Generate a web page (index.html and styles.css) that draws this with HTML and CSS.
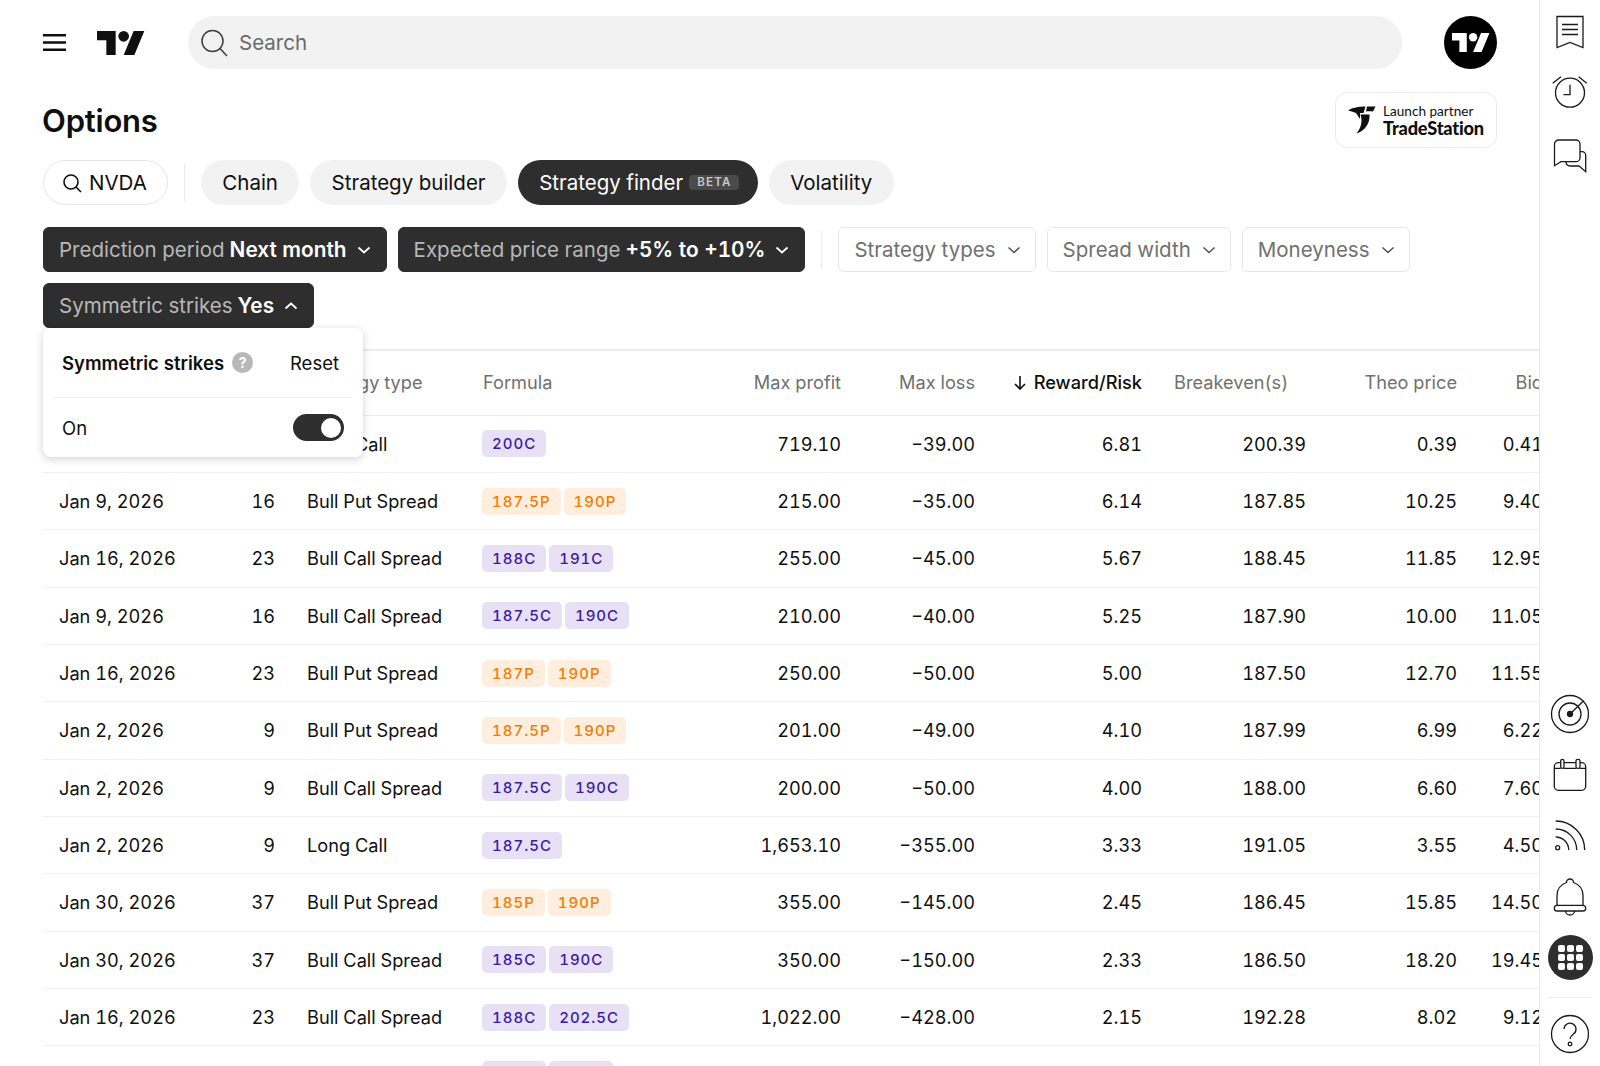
FILE: index.html
```html
<!DOCTYPE html>
<html lang="en">
<head>
<meta charset="utf-8">
<title>Options</title>
<link rel="stylesheet" href="styles.css">
</head>
<body>
<div class="app">
  <main class="main">
    <header class="topbar">
      <svg class="burger" viewBox="0 0 23 17" width="23" height="17"><path d="M0 1.200h23M0 8.500h23M0 15.800h23" stroke="#0f0f0f" stroke-width="2.400"/></svg>
      <svg class="logo" viewBox="0 0 36 18" width="48" height="24"><path d="M14 18H7V7H0V0h14zM28 18h-8L27.500 0h8z" fill="#0f0f0f"/><circle cx="20" cy="4" r="4" fill="#0f0f0f"/></svg>
      <div class="search">
        <svg viewBox="0 0 28 28" width="28" height="28"><circle cx="12.500" cy="12" r="10.500" fill="none" stroke="#3d3d3d" stroke-width="1.500"/><path d="M20 19.500l7 7.500" stroke="#3d3d3d" stroke-width="1.500"/></svg>
        <span>Search</span>
      </div>
      <div class="avatar">
        <svg viewBox="0 0 36 18" width="38" height="19"><path d="M14 18H7V7H0V0h14zM28 18h-8L27.500 0h8z" fill="#fff"/><circle cx="20" cy="4" r="4" fill="#fff"/></svg>
      </div>
    </header>

    <div class="titlerow">
      <h1>Options</h1>
      <div class="partner">
        <svg viewBox="0 0 28 28" width="28" height="28"><path d="M0 4.500C5 1.500 10 .5 17.500 .5L15.500 7H12V13L8 7C5 6 2.500 5 0 4.500z" fill="#0f0f0f"/><path d="M19 .5H27.500L25 5.500C22 5 20 5 18 5.500z" fill="#0f0f0f"/><path d="M12.500 8.500H21.500C22 17 17.500 24.500 8.500 27.500C12.500 22.500 15 16 12.500 8.500z" fill="#0f0f0f"/></svg>
        <div class="partner-text"><span class="lp">Launch partner</span><b>TradeStation</b></div>
      </div>
    </div>

    <nav class="tabs">
      <div class="tab tab-symbol">
        <svg viewBox="0 0 20 20" width="20" height="20"><circle cx="9" cy="9" r="7" fill="none" stroke="#0f0f0f" stroke-width="1.600"/><path d="M14 14l5 5" stroke="#0f0f0f" stroke-width="1.600"/></svg>
        NVDA
      </div>
      <div class="vsep"></div>
      <div class="tab">Chain</div>
      <div class="tab">Strategy builder</div>
      <div class="tab tab-active">Strategy finder <span class="beta">BETA</span></div>
      <div class="tab">Volatility</div>
    </nav>

    <div class="filters">
      <div class="filter filter-on">Prediction period <b>Next month</b><svg class="chev" viewBox="0 0 14 8" width="14" height="8"><path d="M1.500 1.500L7 6.500l5.500-5" fill="none" stroke="currentColor" stroke-width="1.800"/></svg></div>
      <div class="filter filter-on">Expected price range <b>+5% to +10%</b><svg class="chev" viewBox="0 0 14 8" width="14" height="8"><path d="M1.500 1.500L7 6.500l5.500-5" fill="none" stroke="currentColor" stroke-width="1.800"/></svg></div>
      <div class="vsep vsep-f"></div>
      <div class="filter">Strategy types<svg class="chev" viewBox="0 0 14 8" width="14" height="8"><path d="M1.500 1.500L7 6.500l5.500-5" fill="none" stroke="currentColor" stroke-width="1.600"/></svg></div>
      <div class="filter">Spread width<svg class="chev" viewBox="0 0 14 8" width="14" height="8"><path d="M1.500 1.500L7 6.500l5.500-5" fill="none" stroke="currentColor" stroke-width="1.600"/></svg></div>
      <div class="filter">Moneyness<svg class="chev" viewBox="0 0 14 8" width="14" height="8"><path d="M1.500 1.500L7 6.500l5.500-5" fill="none" stroke="currentColor" stroke-width="1.600"/></svg></div>
      <div class="filter-wrap">
        <div class="filter filter-on">Symmetric strikes <b>Yes</b><svg class="chev" viewBox="0 0 14 8" width="14" height="8"><path d="M1.500 6.500L7 1.500l5.500 5" fill="none" stroke="currentColor" stroke-width="1.800"/></svg></div>
        <div class="popover">
          <div class="pop-head">
            <span class="pop-title">Symmetric strikes</span>
            <span class="q">?</span>
            <span class="reset">Reset</span>
          </div>
          <div class="pop-row">
            <span>On</span>
            <span class="switch"><span class="knob"></span></span>
          </div>
        </div>
      </div>
    </div>

    <div class="tablewrap">
      <table>
        <colgroup>
          <col class="c1"><col class="c2"><col class="c3"><col class="c4"><col class="c5"><col class="c6"><col class="c7"><col class="c8"><col class="c9"><col class="c10">
        </colgroup>
        <thead>
          <tr>
            <th class="l">Expiration</th><th>DTE</th><th class="l">Strategy type</th><th class="l">Formula</th><th>Max profit</th><th>Max loss</th>
            <th class="sorted"><svg viewBox="0 0 12 14" width="12" height="14"><path d="M6 0v12.500M1 8l5 5 5-5" fill="none" stroke="#0f0f0f" stroke-width="1.600"/></svg> Reward/Risk</th>
            <th class="l">Breakeven(s)</th><th>Theo price</th><th>Bid</th>
          </tr>
        </thead>
        <tbody>
          <tr><td class="l">Jan 2, 2026</td><td>9</td><td class="l">Long Call</td><td class="l"><span class="tag c">200C</span></td><td>719.10</td><td>−39.00</td><td>6.81</td><td>200.39</td><td>0.39</td><td>0.41</td></tr>
          <tr><td class="l">Jan 9, 2026</td><td>16</td><td class="l">Bull Put Spread</td><td class="l"><span class="tag p">187.5P</span><span class="tag p">190P</span></td><td>215.00</td><td>−35.00</td><td>6.14</td><td>187.85</td><td>10.25</td><td>9.40</td></tr>
          <tr><td class="l">Jan 16, 2026</td><td>23</td><td class="l">Bull Call Spread</td><td class="l"><span class="tag c">188C</span><span class="tag c">191C</span></td><td>255.00</td><td>−45.00</td><td>5.67</td><td>188.45</td><td>11.85</td><td>12.95</td></tr>
          <tr><td class="l">Jan 9, 2026</td><td>16</td><td class="l">Bull Call Spread</td><td class="l"><span class="tag c">187.5C</span><span class="tag c">190C</span></td><td>210.00</td><td>−40.00</td><td>5.25</td><td>187.90</td><td>10.00</td><td>11.05</td></tr>
          <tr><td class="l">Jan 16, 2026</td><td>23</td><td class="l">Bull Put Spread</td><td class="l"><span class="tag p">187P</span><span class="tag p">190P</span></td><td>250.00</td><td>−50.00</td><td>5.00</td><td>187.50</td><td>12.70</td><td>11.55</td></tr>
          <tr><td class="l">Jan 2, 2026</td><td>9</td><td class="l">Bull Put Spread</td><td class="l"><span class="tag p">187.5P</span><span class="tag p">190P</span></td><td>201.00</td><td>−49.00</td><td>4.10</td><td>187.99</td><td>6.99</td><td>6.22</td></tr>
          <tr><td class="l">Jan 2, 2026</td><td>9</td><td class="l">Bull Call Spread</td><td class="l"><span class="tag c">187.5C</span><span class="tag c">190C</span></td><td>200.00</td><td>−50.00</td><td>4.00</td><td>188.00</td><td>6.60</td><td>7.60</td></tr>
          <tr><td class="l">Jan 2, 2026</td><td>9</td><td class="l">Long Call</td><td class="l"><span class="tag c">187.5C</span></td><td>1,653.10</td><td>−355.00</td><td>3.33</td><td>191.05</td><td>3.55</td><td>4.50</td></tr>
          <tr><td class="l">Jan 30, 2026</td><td>37</td><td class="l">Bull Put Spread</td><td class="l"><span class="tag p">185P</span><span class="tag p">190P</span></td><td>355.00</td><td>−145.00</td><td>2.45</td><td>186.45</td><td>15.85</td><td>14.50</td></tr>
          <tr><td class="l">Jan 30, 2026</td><td>37</td><td class="l">Bull Call Spread</td><td class="l"><span class="tag c">185C</span><span class="tag c">190C</span></td><td>350.00</td><td>−150.00</td><td>2.33</td><td>186.50</td><td>18.20</td><td>19.45</td></tr>
          <tr><td class="l">Jan 16, 2026</td><td>23</td><td class="l">Bull Call Spread</td><td class="l"><span class="tag c">188C</span><span class="tag c">202.5C</span></td><td>1,022.00</td><td>−428.00</td><td>2.15</td><td>192.28</td><td>8.02</td><td>9.12</td></tr>
          <tr><td class="l"></td><td></td><td class="l"></td><td class="l"><span class="tag c">188C</span><span class="tag c">190C</span></td><td></td><td></td><td></td><td></td><td></td><td></td></tr>
        </tbody>
      </table>
    </div>
  </main>

  <aside class="rail">
    <div class="rail-group">
      <div class="rail-item">
        <svg viewBox="0 0 40 40" width="40" height="40"><path d="M7 4.500h26v31l-13-5-13 5z"/><path d="M12 12.500h16M12 17.500h16M12 22.500h16"/></svg>
      </div>
      <div class="rail-item">
        <svg viewBox="0 0 40 40" width="40" height="40"><circle cx="20" cy="20.700" r="14.500"/><path d="M20 12.700v10h-6.500M2.700 11.300L11 4.700M28.700 4.700l8 6.600"/></svg>
      </div>
      <div class="rail-item rail-chat">
        <svg viewBox="0 0 40 40" width="40" height="40"><path d="M4.500 29.700V8a4 4 0 0 1 4-4H26a4 4 0 0 1 4 4v13.700a4 4 0 0 1-4 4H11z"/><path d="M30 15.700h2a3.700 3.700 0 0 1 3.700 3.700v16.300L29 30h-9a4 4 0 0 1-4-4.300"/></svg>
      </div>
    </div>
    <div class="rail-group">
      <div class="rail-item">
        <svg viewBox="0 0 40 40" width="40" height="40"><circle cx="20" cy="20" r="18.500"/><circle cx="20" cy="20" r="11"/><path d="M20 20L33.700 6.700"/><circle class="solid" cx="20" cy="20" r="2.500"/></svg>
      </div>
      <div class="rail-item">
        <svg viewBox="0 0 40 40" width="40" height="40"><path d="M10.700 7.700H8.300a4 4 0 0 0-4 4v19.600a4 4 0 0 0 4 4h23.400a4 4 0 0 0 4-4V11.700a4 4 0 0 0-4-4h-1.700M14 7.700h12M4.300 13.300h6.400M14 13.300h12M30 13.300h5.700"/><rect x="10.700" y="4.300" width="3.300" height="9" rx="1.600"/><rect x="26" y="4.300" width="4" height="9" rx="1.600"/></svg>
      </div>
      <div class="rail-item">
        <svg viewBox="0 0 40 40" width="40" height="40"><circle cx="7.700" cy="31.700" r="2"/><path d="M5.700 21A13 13 0 0 1 18.700 34M5.700 13A21 21 0 0 1 26.700 34M5.700 5A29 29 0 0 1 34.700 34"/></svg>
      </div>
      <div class="rail-item">
        <svg viewBox="0 0 40 40" width="40" height="40"><path d="M7 28.300V18.500C7 12 11 7.500 16.500 5.500A3.500 3.500 0 0 1 23.500 5.500C29 7.500 33 12 33 18.500V28.300"/><rect x="4.300" y="28.300" width="31.400" height="5.700" rx="2.850"/><path d="M15.500 34a4.500 4 0 0 0 9 0"/></svg>
      </div>
      <div class="rail-item">
        <div class="apps">
          <svg class="apps-dots" viewBox="0 0 25 25" width="25" height="25"><rect x="0" y="0" width="7" height="7" rx="2"/><rect x="9" y="0" width="7" height="7" rx="2"/><rect x="18" y="0" width="7" height="7" rx="2"/><rect x="0" y="9" width="7" height="7" rx="2"/><rect x="9" y="9" width="7" height="7" rx="2"/><rect x="18" y="9" width="7" height="7" rx="2"/><rect x="0" y="18" width="7" height="7" rx="2"/><rect x="9" y="18" width="7" height="7" rx="2"/><rect x="18" y="18" width="7" height="7" rx="2"/></svg>
        </div>
      </div>
      <div class="rail-div"></div>
      <div class="rail-item">
        <svg viewBox="0 0 40 40" width="40" height="40"><circle cx="20" cy="20" r="18.500"/><path d="M14 15a6 6 0 1 1 9.500 5c-2 1.500-3.500 2.500-3.500 5"/><circle cx="20" cy="30" r="1.800"/></svg>
      </div>
    </div>
  </aside>
</div>
</body>
</html>
```

FILE: styles.css
```css
* { box-sizing: border-box; }
html, body { margin: 0; height: 100%; overflow: hidden; background: #fff; }
body { font-family: Inter, "Liberation Sans", sans-serif; color: #0f0f0f; font-size: 20.500px; font-variant-numeric: tabular-nums; }
.app { display: flex; width: 1600px; height: 1066px; overflow: hidden; }

.main { width: 1539px; flex: none; padding: 16px 0 0 43px; overflow: hidden; display: flex; flex-direction: column; }
.main > * { flex: none; }

.topbar { display: flex; align-items: center; height: 53px; padding-right: 42px; }
.burger { flex: none; }
.logo { flex: none; margin-left: 31px; }
.search { flex: 1; height: 53px; margin-left: 43px; border-radius: 27px; background: #f2f2f2; display: flex; align-items: center; gap: 11px; padding-left: 12px; color: #6a6a6a; font-size: 20.500px; }
.avatar { flex: none; width: 53px; height: 53px; border-radius: 50%; background: #000; margin-left: 42px; display: flex; align-items: center; justify-content: center; }

.titlerow { display: flex; justify-content: space-between; align-items: flex-start; padding-right: 42px; margin-top: 23px; height: 68px; }
h1 { margin: 10px 0 0 -1px; font-size: 31px; font-weight: 600; line-height: 38px; letter-spacing: -0.2px; }
.partner { width: 162px; height: 56px; border: 1px solid #ececec; border-radius: 12px; display: flex; align-items: center; gap: 7px; padding-left: 12px; }
.partner-text { display: flex; flex-direction: column; font-family: Lato, sans-serif; line-height: 17px; }
.lp { font-size: 13.600px; }
.partner-text b { font-size: 18.200px; font-weight: 900; letter-spacing: -0.2px; }

.tabs { display: flex; align-items: center; gap: 11px; height: 45px; }
.tab { height: 45px; border-radius: 23px; background: #f2f2f2; padding: 0 21.300px; display: flex; align-items: center; white-space: nowrap; }
.tab-symbol { background: #fff; border: 1px solid #e6e6e6; gap: 7px; padding: 0 20px 0 18px; width: 125px; }
.tab-active { background: #2e2e2e; color: #fff; gap: 6px; width: 240px; }
.beta { font-size: 11.500px; font-weight: 600; letter-spacing: 1.200px; background: #4a4a4a; color: #c8c8c8; border-radius: 4px; padding: 0 8px; line-height: 15px; }
.vsep { width: 1px; height: 37px; background: #eaeaea; margin: 0 5px; flex: none; }

.filters { display: flex; flex-wrap: wrap; gap: 11px; margin-top: 22px; padding-right: 42px; align-items: center; }
.filter { height: 45px; border-radius: 6px; border: 1px solid #e6e6e6; color: #707070; display: flex; align-items: center; gap: 5px; padding: 0 14px 0 15px; white-space: nowrap; }
.filter .chev { margin-left: 6px; color: #555; }
.filter-on { background: #2e2e2e; border-color: #2e2e2e; color: #b8b8b8; padding: 0 15px; }
.filter-on b { color: #fff; font-weight: 600; font-size: 20.800px; }
.filter-on .chev { color: #fff; margin-left: 5px; }
.vsep-f { margin: 0 5px; height: 37px; }
.filter-wrap { position: relative; flex: none; }

.popover { position: absolute; z-index: 5; left: 0; top: 45px; width: 320px; height: 129px; background: #fff; border-radius: 8px; box-shadow: 0 2px 8px rgba(0,0,0,0.18); padding: 0 11px; }
.pop-head { height: 70px; border-bottom: 1px solid #ececec; display: flex; align-items: center; padding: 0 13px 0 8px; font-size: 18.500px; }
.pop-title { font-weight: 600; }
.q { width: 21px; height: 21px; border-radius: 50%; background: #b8b8b8; color: #fff; font-size: 14px; font-weight: 700; display: flex; align-items: center; justify-content: center; margin-left: 8px; }
.reset { margin-left: auto; }
.pop-row { height: 59px; display: flex; align-items: center; justify-content: space-between; padding: 0 8px; font-size: 18.500px; }
.switch { width: 51px; height: 27px; border-radius: 14px; background: #2e2e2e; display: flex; align-items: center; justify-content: flex-end; padding-right: 3px; }
.knob { width: 20px; height: 20px; border-radius: 50%; background: #fff; }

.tablewrap { margin-top: 21px; overflow: hidden; height: 720px; }
table { table-layout: fixed; border-collapse: collapse; width: 1516px; font-size: 18.200px; border-top: 2px solid #ececec; }
.c1 { width: 177px; } .c2 { width: 71px; } .c3 { width: 176px; } .c4 { width: 233px; } .c5 { width: 157px; }
.c6 { width: 134px; } .c7 { width: 167px; } .c8 { width: 164px; } .c9 { width: 151px; } .c10 { width: 86px; }
th, td { padding: 0 16px; text-align: right; white-space: nowrap; overflow: visible; }
th { height: 65px; padding-bottom: 2px; font-weight: 400; color: #707070; border-bottom: 1px solid #ececec; }
th.sorted { color: #0f0f0f; font-weight: 500; }
th.sorted svg { margin-right: 3px; vertical-align: -1px; }
td { height: 57.350px; border-bottom: 1px solid #f0f0f0; }
td.l .tag:first-child { margin-left: -1px; }
.l { text-align: left; }
.tag { display: inline-block; height: 27px; line-height: 27px; padding: 0 10px; border-radius: 5px; font-size: 15px; font-weight: 500; letter-spacing: 1px; margin-right: 3px; vertical-align: middle; }
.tag.c { background: #e8e1f5; color: #3a1aa8; }
.tag.p { background: #ffeddd; color: #f57c00; }

.rail { width: 61px; flex: none; border-left: 1px solid #e8e8e8; display: flex; flex-direction: column; justify-content: space-between; padding-top: 2px; padding-bottom: 2px; }
.rail-group { display: flex; flex-direction: column; }
.rail-item { height: 61px; display: flex; align-items: center; justify-content: center; }
.rail-group:first-child .rail-item { height: 60px; }
.rail-group:first-child .rail-chat { margin-top: 4px; }
.rail-item svg { fill: none; stroke: #1a1a1a; stroke-width: 1.300; }
.rail-item svg .solid { fill: #1a1a1a; }
.apps { width: 45px; height: 45px; border-radius: 50%; background: #2e2e2e; display: flex; align-items: center; justify-content: center; }
.rail-item .apps-dots { fill: #fff; stroke: none; }
.rail-div { height: 1px; background: #ececec; margin: 9px 8px 5px; }
```
